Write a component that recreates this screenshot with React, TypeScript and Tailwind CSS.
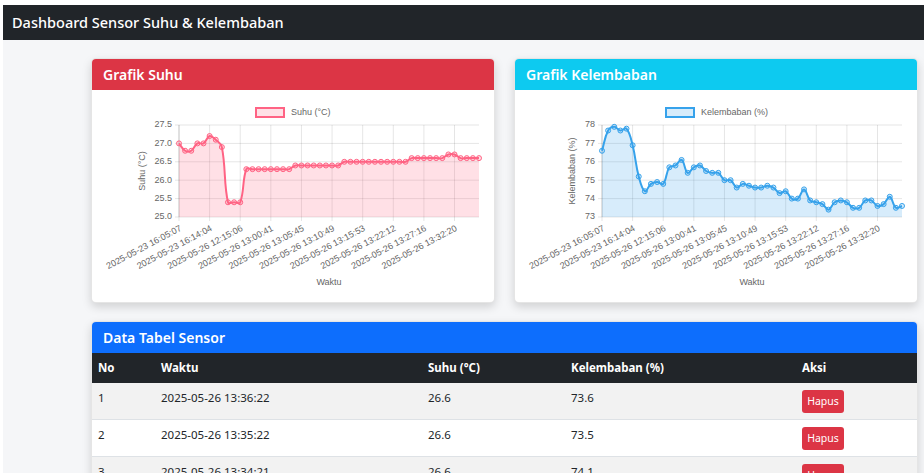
import React from "react";

const suhu = [
  27.0, 26.8, 26.8, 27.0, 27.0, 27.2, 27.1, 26.9, 25.4, 25.4,
  25.4, 26.3, 26.3, 26.3, 26.3, 26.3, 26.3, 26.3, 26.3, 26.4,
  26.4, 26.4, 26.4, 26.4, 26.4, 26.4, 26.4, 26.5, 26.5, 26.5,
  26.5, 26.5, 26.5, 26.5, 26.5, 26.5, 26.5, 26.5, 26.6, 26.6,
  26.6, 26.6, 26.6, 26.6, 26.7, 26.7, 26.6, 26.6, 26.6, 26.6,
];

const kelembaban = [
  76.6, 77.7, 77.9, 77.7, 77.8, 76.9, 75.2, 74.4, 74.8, 74.9,
  74.8, 75.7, 75.8, 76.1, 75.4, 75.7, 75.8, 75.5, 75.4, 75.4,
  75.0, 75.0, 74.6, 74.8, 74.7, 74.6, 74.6, 74.7, 74.6, 74.3,
  74.4, 74.0, 74.0, 74.5, 73.9, 73.8, 73.7, 73.4, 73.8, 73.9,
  73.8, 73.5, 73.5, 73.9, 73.9, 73.6, 73.7, 74.1, 73.5, 73.6,
];

// every 5th timestamp is shown on the x axis
const labels = [
  "2025-05-23 16:05:07",
  "2025-05-23 16:14:04",
  "2025-05-26 12:15:06",
  "2025-05-26 13:00:41",
  "2025-05-26 13:05:45",
  "2025-05-26 13:10:49",
  "2025-05-26 13:15:53",
  "2025-05-26 13:22:12",
  "2025-05-26 13:27:16",
  "2025-05-26 13:32:20",
];

const rows = [
  { no: 1, waktu: "2025-05-26 13:36:22", suhu: "26.6", hum: "73.6" },
  { no: 2, waktu: "2025-05-26 13:35:22", suhu: "26.6", hum: "73.5" },
  { no: 3, waktu: "2025-05-26 13:34:21", suhu: "26.6", hum: "74.1" },
  { no: 4, waktu: "2025-05-26 13:33:21", suhu: "26.6", hum: "73.5" },
  { no: 5, waktu: "2025-05-26 13:32:20", suhu: "26.6", hum: "73.7" },
];

const L = 87;
const R = 387;
const T = 35;
const B = 127;
const tickFont = "'Liberation Sans', Arial, sans-serif";

type Pt = { x: number; y: number };

// same spline as chart.js (tension 0.4)
function smoothPath(pts: Pt[], t = 0.4) {
  const cps = pts.map((cur, i) => {
    const prev = pts[i - 1] ?? cur;
    const next = pts[i + 1] ?? cur;
    const d01 = Math.hypot(cur.x - prev.x, cur.y - prev.y);
    const d12 = Math.hypot(next.x - cur.x, next.y - cur.y);
    let s01 = d01 / (d01 + d12);
    let s12 = d12 / (d01 + d12);
    if (isNaN(s01)) s01 = 0;
    if (isNaN(s12)) s12 = 0;
    const fa = t * s01;
    const fb = t * s12;
    const clampY = (v: number) => Math.min(B, Math.max(T, v));
    return {
      p: { x: cur.x - fa * (next.x - prev.x), y: clampY(cur.y - fa * (next.y - prev.y)) },
      n: { x: cur.x + fb * (next.x - prev.x), y: clampY(cur.y + fb * (next.y - prev.y)) },
    };
  });
  let d = `M${pts[0].x},${pts[0].y}`;
  for (let i = 1; i < pts.length; i++) {
    const a = cps[i - 1].n;
    const b = cps[i].p;
    d += ` C${a.x},${a.y} ${b.x},${b.y} ${pts[i].x},${pts[i].y}`;
  }
  return d;
}

type ChartProps = {
  data: number[];
  min: number;
  max: number;
  step: number;
  decimals: number;
  stroke: string;
  fill: string;
  legend: string;
  legendX: number;
  yTitle: string;
  yTitleX: number;
};

function LineChart({ data, min, max, step, decimals, stroke, fill, legend, legendX, yTitle, yTitleX }: ChartProps) {
  const sx = (i: number) => L + (i * (R - L)) / (data.length - 1);
  const sy = (v: number) => B - ((v - min) / (max - min)) * (B - T);
  const pts = data.map((v, i) => ({ x: sx(i), y: sy(v) }));
  const line = smoothPath(pts);
  const area = `${line} L${R},${B} L${L},${B} Z`;
  const yTicks: number[] = [];
  for (let v = min; v <= max + 1e-9; v += step) yTicks.push(v);

  return (
    <svg width="402" height="212" className="block">
      {/* legend */}
      <rect x={legendX} y={18} width={28} height={9} fill={fill} stroke={stroke} strokeWidth={2} />
      <text x={legendX + 35} y={23} fontSize={9} fill="#666" fontFamily={tickFont} dominantBaseline="middle">
        {legend}
      </text>

      {/* grid */}
      {yTicks.map((v) => (
        <g key={v}>
          <line x1={L - 4} x2={R} y1={sy(v)} y2={sy(v)} stroke="rgba(0,0,0,0.1)" />
          <text x={L - 7} y={sy(v)} fontSize={9} fill="#666" fontFamily={tickFont} textAnchor="end" dominantBaseline="middle">
            {v.toFixed(decimals)}
          </text>
        </g>
      ))}
      {labels.map((lb, k) => {
        const x = sx(k * 5);
        return (
          <g key={lb}>
            <line x1={x} x2={x} y1={T} y2={B + 4} stroke="rgba(0,0,0,0.1)" />
            <text
              x={x + 2}
              y={B + 11}
              fontSize={9}
              fill="#666"
              fontFamily={tickFont}
              textAnchor="end"
              dominantBaseline="middle"
              transform={`rotate(-28 ${x + 2} ${B + 11})`}
            >
              {lb}
            </text>
          </g>
        );
      })}
      <line x1={L} x2={L} y1={T} y2={B} stroke="rgba(0,0,0,0.15)" />

      {/* dataset */}
      <path d={area} fill={fill} />
      <path d={line} fill="none" stroke={stroke} strokeWidth={2} />
      {pts.map((p, i) => (
        <circle key={i} cx={p.x} cy={p.y} r={2.5} fill={fill} stroke={stroke} strokeWidth={1} />
      ))}

      {/* axis titles */}
      <text
        x={yTitleX}
        y={(T + B) / 2}
        fontSize={9}
        fill="#666"
        fontFamily={tickFont}
        textAnchor="middle"
        dominantBaseline="middle"
        transform={`rotate(-90 ${yTitleX} ${(T + B) / 2})`}
      >
        {yTitle}
      </text>
      <text x={(L + R) / 2} y={193} fontSize={9} fill="#666" fontFamily={tickFont} textAnchor="middle" dominantBaseline="middle">
        Waktu
      </text>
    </svg>
  );
}

function Card({ title, color, children }: { title: string; color: string; children: React.ReactNode }) {
  return (
    <div className="bg-white rounded-[5px] border border-black/10 shadow-[0_4px_10px_rgba(0,0,0,0.15)] overflow-hidden">
      <div className={`${color} h-[31px] flex items-center px-[11px] text-white text-[14px] font-semibold`}>{title}</div>
      {children}
    </div>
  );
}

export default function App() {
  return (
    <div className="min-h-screen bg-white pl-[3px] pt-[5px] font-['Segoe_UI','Noto_Sans',sans-serif] text-[#212529]">
      <nav className="h-[35px] bg-[#212529] flex items-center px-[9px] text-white text-[14.5px] font-medium">
        Dashboard Sensor Suhu &amp; Kelembaban
      </nav>

      <main className="bg-[#f5f6f8] min-h-[calc(100vh-40px)] pt-[18px] pl-[88px]">
        <div className="w-[827px] flex flex-col gap-[18px]">
          <div className="grid grid-cols-2 gap-[19px]">
            <Card title="Grafik Suhu" color="bg-[#dc3545]">
              <LineChart
                data={suhu}
                min={25}
                max={27.5}
                step={0.5}
                decimals={1}
                stroke="rgb(255,99,132)"
                fill="rgba(255,99,132,0.2)"
                legend="Suhu (°C)"
                legendX={164}
                yTitle="Suhu (°C)"
                yTitleX={51}
              />
            </Card>
            <Card title="Grafik Kelembaban" color="bg-[#0dcaf0]">
              <LineChart
                data={kelembaban}
                min={73}
                max={78}
                step={1}
                decimals={0}
                stroke="rgb(54,162,235)"
                fill="rgba(54,162,235,0.2)"
                legend="Kelembaban (%)"
                legendX={151}
                yTitle="Kelembaban (%)"
                yTitleX={58}
              />
            </Card>
          </div>

          <Card title="Data Tabel Sensor" color="bg-[#0d6efd]">
            <table className="w-full table-fixed text-[11.5px] border-collapse">
              <colgroup>
                <col className="w-[63px]" />
                <col className="w-[267px]" />
                <col className="w-[143px]" />
                <col className="w-[231px]" />
                <col />
              </colgroup>
              <thead>
                <tr className="bg-[#212529] text-white text-left h-[30px]">
                  <th className="px-[6px] font-bold">No</th>
                  <th className="px-[6px] font-bold">Waktu</th>
                  <th className="px-[6px] font-bold">Suhu (°C)</th>
                  <th className="px-[6px] font-bold">Kelembaban (%)</th>
                  <th className="px-[6px] font-bold">Aksi</th>
                </tr>
              </thead>
              <tbody>
                {rows.map((r, i) => (
                  <tr key={r.no} className={`${i % 2 === 0 ? "bg-[#f2f2f2]" : "bg-white"} border-b border-[#dee2e6] align-top`}>
                    <td className="px-[6px] py-[6px] leading-[18px]">{r.no}</td>
                    <td className="px-[6px] py-[6px] leading-[18px]">{r.waktu}</td>
                    <td className="px-[6px] py-[6px] leading-[18px]">{r.suhu}</td>
                    <td className="px-[6px] py-[6px] leading-[18px]">{r.hum}</td>
                    <td className="px-[6px] py-[6px]">
                      <button className="bg-[#dc3545] text-white text-[10.5px] h-[23px] w-[42px] rounded-[3px] mt-[1px]">
                        Hapus
                      </button>
                    </td>
                  </tr>
                ))}
              </tbody>
            </table>
          </Card>
        </div>
      </main>
    </div>
  );
}
